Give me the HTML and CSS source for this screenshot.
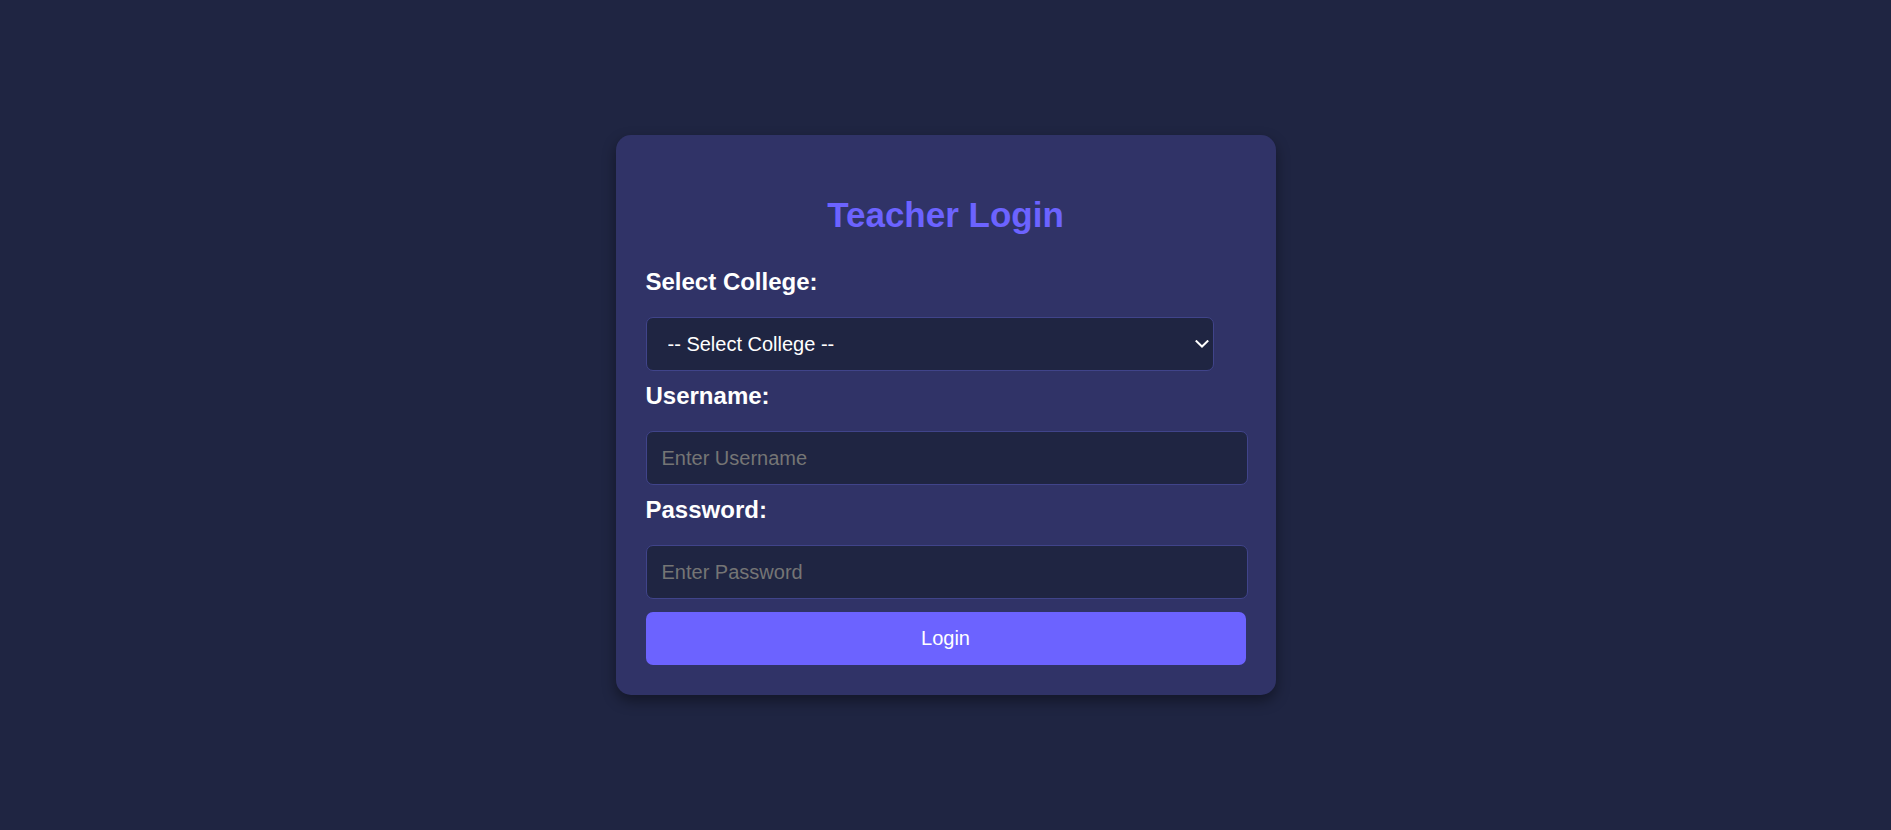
FILE: index.html
```html
<!DOCTYPE html>
<html lang="en">
<head>
<meta charset="utf-8">
<title>Teacher Login</title>
<link rel="stylesheet" href="styles.css">
</head>
<body>
  <main class="page">
    <form class="card">
      <h2 class="title">Teacher Login</h2>
      <label class="label" for="college">Select College:</label>
      <div class="select-wrap">
        <select class="field select" id="college">
          <option>-- Select College --</option>
        </select>
        <svg class="chevron" width="14" height="8" viewBox="0 0 14 8" aria-hidden="true">
          <path d="M1.5 1.2 L7 6.5 L12.5 1.2" fill="none" stroke="#ffffff" stroke-width="2" stroke-linecap="square"/>
        </svg>
      </div>
      <label class="label" for="username">Username:</label>
      <input class="field input" id="username" type="text" placeholder="Enter Username">
      <label class="label" for="password">Password:</label>
      <input class="field input" id="password" type="password" placeholder="Enter Password">
      <button class="btn" type="button">Login</button>
    </form>
  </main>
</body>
</html>
```

FILE: styles.css
```css
* { box-sizing: border-box; }

html, body {
  margin: 0;
  padding: 0;
}

body {
  background: #1f2542;
  font-family: "Liberation Sans", Arial, sans-serif;
  color: #ffffff;
}

.page {
  min-height: 100vh;
  display: flex;
  align-items: center;
  justify-content: center;
}

.card {
  width: 660px;
  padding: 30px;
  background: #303367;
  border-radius: 15px;
  box-shadow: 0 6px 14px rgba(0, 0, 0, 0.4);
  display: flex;
  flex-direction: column;
  align-items: flex-start;
}

.title {
  align-self: stretch;
  margin: 30px 0 33px;
  text-align: center;
  font-size: 35px;
  font-weight: bold;
  line-height: normal;
  color: #6c63ff;
}

.label {
  display: block;
  font-size: 24px;
  font-weight: bold;
  line-height: normal;
  color: #ffffff;
  margin-bottom: 21px;
}

.field {
  height: 54px;
  padding: 0 15px;
  background: #1f2542;
  border: 1px solid #40448a;
  border-radius: 7px;
  color: #ffffff;
  font-family: "Liberation Sans", Arial, sans-serif;
  font-size: 20px;
  margin-bottom: 11px;
  outline: none;
}

.select-wrap {
  position: relative;
  width: 568px;
  margin-bottom: 11px;
}

.select {
  display: block;
  width: 100%;
  margin: 0;
  padding-left: 21px;
  padding-right: 30px;
  -webkit-appearance: none;
  appearance: none;
}

.chevron {
  position: absolute;
  right: 5px;
  top: 23px;
  pointer-events: none;
}

.input {
  width: calc(100% + 2px);
}

.input::placeholder {
  color: #757575;
}

.btn {
  align-self: stretch;
  height: 53px;
  margin-top: 2px;
  border: none;
  border-radius: 7px;
  background: #6c63ff;
  color: #ffffff;
  font-family: "Liberation Sans", Arial, sans-serif;
  font-size: 20px;
  cursor: pointer;
}
```
